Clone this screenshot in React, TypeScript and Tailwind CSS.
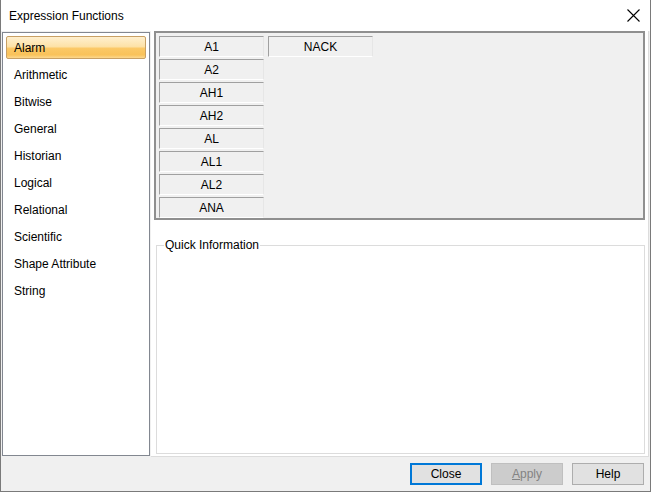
import React from 'react';

const categories = [
  'Alarm',
  'Arithmetic',
  'Bitwise',
  'General',
  'Historian',
  'Logical',
  'Relational',
  'Scientific',
  'Shape Attribute',
  'String',
];

const columns = [
  ['A1', 'A2', 'AH1', 'AH2', 'AL', 'AL1', 'AL2', 'ANA'],
  ['NACK'],
];

const FnCell: React.FC<{ label: string }> = ({ label }) => (
  <div className="h-[21px] w-[105px] shrink-0 flex items-center justify-center pt-[1px] border border-t-[#a0a0a0] border-l-[#a0a0a0] border-r-[#e6e6e6] border-b-white bg-[#f0f0f0] text-[12px] text-black">
    {label}
  </div>
);

const App: React.FC = () => {
  const selected = 'Alarm';

  return (
    <div className="w-[651px] h-[492px] flex flex-col bg-[#f0f0f0] border-x border-b border-[#7a7a7a] font-['Liberation_Sans',sans-serif] text-[12px] text-black">
      {/* Title bar */}
      <div className="h-[31px] shrink-0 bg-white flex items-center justify-between pl-[8px] pr-[10px]">
        <span className="text-[12px] text-black">Expression Functions</span>
        <svg width="13" height="13" viewBox="0 0 13 13" className="text-black">
          <path d="M0.5 0.5 L12.5 12.5 M12.5 0.5 L0.5 12.5" stroke="currentColor" strokeWidth="1.1" fill="none" />
        </svg>
      </div>

      {/* Body */}
      <div className="h-[426px] shrink-0 flex gap-[1px] pl-[1px] pr-[1px]">
        {/* Category list */}
        <div className="mt-[1px] w-[148px] h-[424px] border border-[#828790] bg-white flex flex-col gap-[4px] pt-[3px] px-[3px]">
          {categories.map((c) =>
            c === selected ? (
              <div
                key={c}
                className="h-[23px] shrink-0 flex items-center pl-[7px] rounded-[2px] border border-[#c8a064] bg-[linear-gradient(to_bottom,#fff0cf_0%,#fde2a8_45%,#fbc866_55%,#f9c25a_85%,#fcd88e_100%)]"
              >
                {c}
              </div>
            ) : (
              <div key={c} className="h-[23px] shrink-0 flex items-center pl-[8px]">
                {c}
              </div>
            )
          )}
        </div>

        {/* Right side */}
        <div className="flex-1 bg-white border-r border-b border-[#dcdcdc] flex flex-col">
          <div className="ml-[3px] mr-[3px] shrink-0 border-2 border-[#8f8f8f] bg-[#f0f0f0] flex px-[1px] pt-[1px]">
            <div className="flex gap-[4px] px-[2px] pt-[2px]">
              {columns.map((col, i) => (
                <div key={i} className="flex flex-col gap-[2px]">
                  {col.map((f) => (
                    <FnCell key={f} label={f} />
                  ))}
                </div>
              ))}
            </div>
          </div>

          <fieldset className="flex-1 min-h-0 mt-[16px] mb-[2px] ml-[5px] mr-[3px] border border-[#dcdcdc]">
            <legend className="ml-[7px] px-[1px] text-[12px] text-black">Quick Information</legend>
          </fieldset>
        </div>
      </div>

      {/* Button bar */}
      <div className="flex-1 flex justify-end items-start pt-[6px] pr-[6px] gap-[9px]">
        <button className="w-[72px] h-[22px] bg-[#e1e1e1] border-2 border-[#0078d7] text-[12px] text-black">
          Close
        </button>
        <button disabled className="w-[72px] h-[22px] bg-[#cccccc] border border-[#bfbfbf] text-[12px] text-[#838383]">
          <span className="underline">A</span>pply
        </button>
        <button className="w-[72px] h-[22px] bg-[#e1e1e1] border border-[#adadad] text-[12px] text-black">
          Help
        </button>
      </div>
    </div>
  );
};

export default App;
